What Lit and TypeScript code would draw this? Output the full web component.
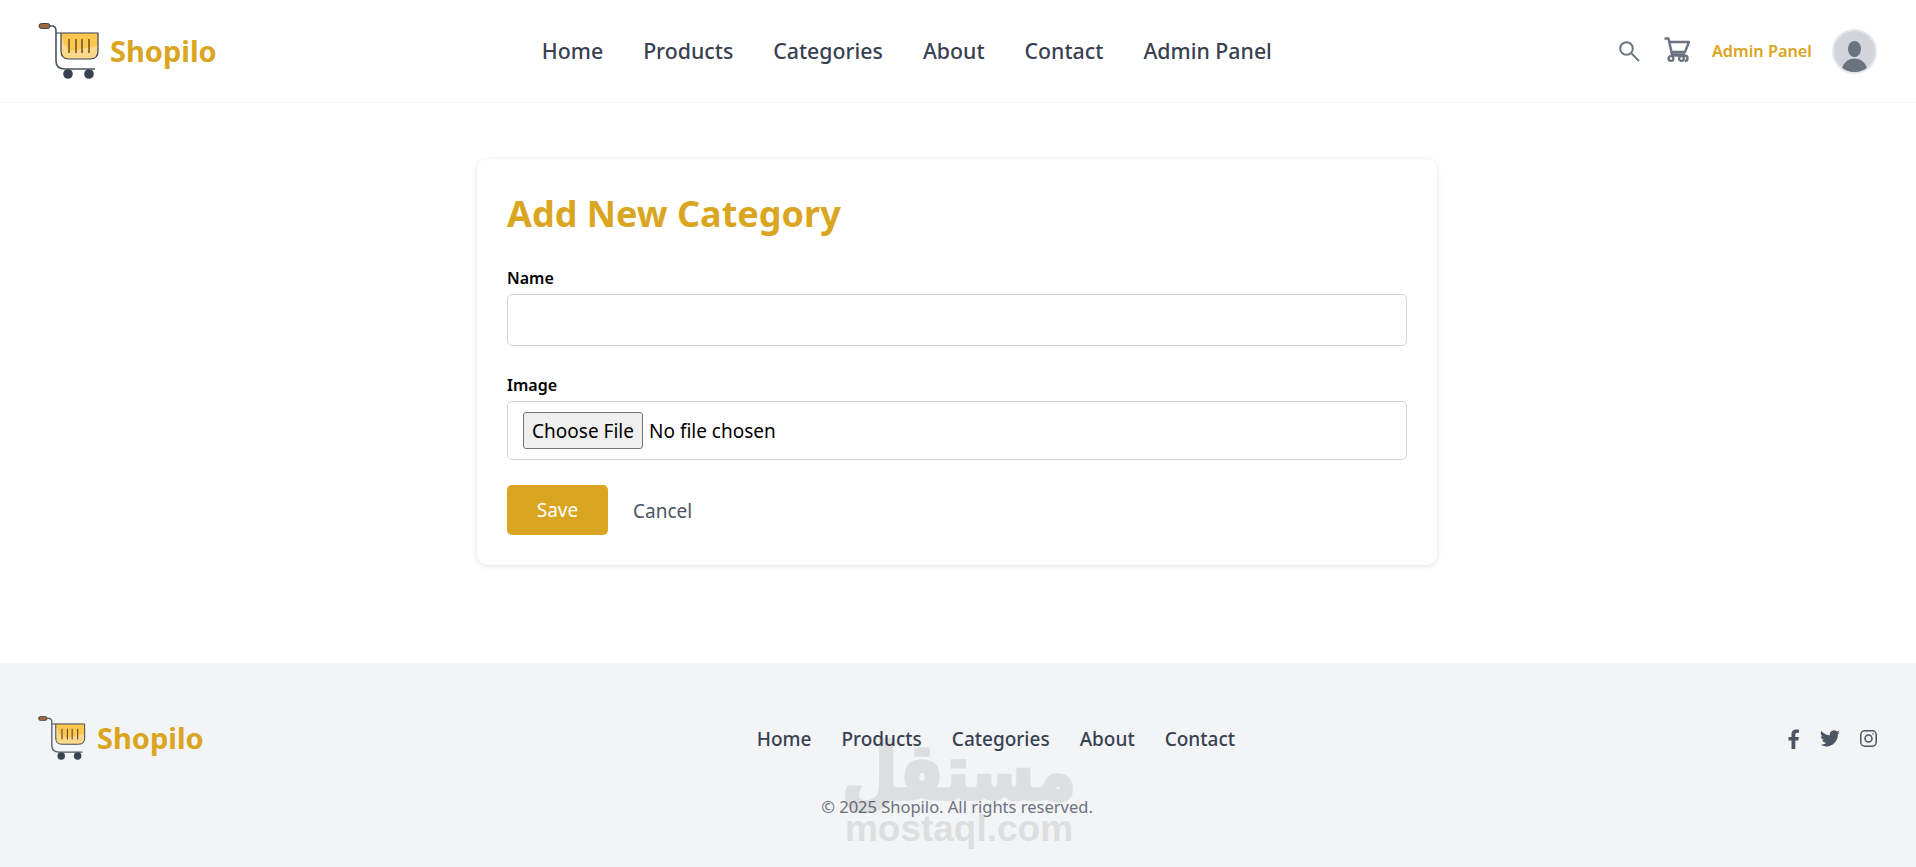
import { LitElement, html, css, svg } from "lit";
import { customElement } from "lit/decorators.js";

const cartLogo = svg`
  <path d="M13 7 H15 Q19 7 19 12 V42 Q19 50 28 50 H58" fill="none" stroke="#4b5563" stroke-width="1.6"/>
  <path d="M24 14 H61 V32 Q61 40 53 40 H32 Q24 40 24 32 Z" fill="#fcd98a"/>
  <path d="M24 14 H61 V27 L33 32 Q26 26 24 14 Z" fill="#fcc64f"/>
  <path d="M19 14 H61 V32 Q61 40 53 40 H32 Q24 40 24 32 V14" fill="none" stroke="#374151" stroke-width="1.2"/>
  <path d="M32 20 V34 M39 20 V34 M45 20 V34 M52 20 V34" stroke="#6b4f2a" stroke-width="1.5" fill="none"/>
  <rect x="2" y="4.5" width="11" height="5" rx="2.5" fill="#a0693a" stroke="#374151" stroke-width="1"/>
  <circle cx="31" cy="55" r="4.8" fill="#374151"/>
  <circle cx="52" cy="55" r="4.8" fill="#374151"/>
`;

@customElement("app-root")
export class AppRoot extends LitElement {
  static styles = css`
    :host { display: block; font-family: "Noto Sans", "Open Sans", sans-serif; color: #000; background: #fff; position: relative; min-height: 867px; }
    * { box-sizing: border-box; }
    a { text-decoration: none; color: inherit; }
    .header { height: 103px; display: flex; align-items: center; justify-content: space-between; padding: 0 39px 0 37px; border-bottom: 1px solid #f3f4f6; }
    .brand { display: flex; align-items: center; gap: 9px; color: #daa520; font-size: 29px; font-weight: 700; }
    .brand svg { display: block; width: 64px; height: 64px; }
    .brand span { margin-bottom: 2px; }
    .footer .brand { gap: 10px; margin-bottom: 1px; }
    .footer .brand svg { width: 50px; height: 50px; }
    .nav { display: flex; gap: 40px; font-size: 21.3px; font-weight: 500; color: #374151; margin: 0 21px 2px 0; }
    .tools { display: flex; align-items: center; }
    .tools svg { display: block; }
    .search { margin-right: 24px; }
    .cart { margin-right: 22px; margin-bottom: 2px; }
    .admin { font-size: 16.3px; font-weight: 600; color: #daa520; margin-right: 20px; }
    .avatar { width: 45px; height: 45px; border-radius: 50%; background: #d1d5db; border: 2px solid #e5e7eb; overflow: hidden; }
    .main { height: 560px; padding-top: 56px; }
    .card { width: 960px; height: 406px; margin: 0 auto 0 477px; padding: 30px; border-radius: 10px; background: #fff; box-shadow: 0 1px 5px rgba(0,0,0,.12); }
    h1 { margin: 0 0 28px; font-size: 36px; line-height: 50px; font-weight: 700; color: #daa520; }
    label { display: block; font-size: 16px; font-weight: 600; line-height: 22px; margin-bottom: 5px; }
    .field { margin-bottom: 28px; }
    .field + .field { margin-bottom: 25px; }
    input { display: block; width: 100%; background: #fff; border: 1px solid #d1d5db; border-radius: 5px; font-family: inherit; font-size: 19px; color: #000; }
    .text { height: 52px; }
    .file { height: 59px; padding: 10px 15px; }
    .file::file-selector-button { height: 37px; width: 120px; padding: 0; margin: 0 6px 0 0; font: 19px "Noto Sans", sans-serif; color: #000; background: #efefef; border: 1px solid #767676; border-radius: 3px; }
    .actions { display: flex; align-items: center; gap: 25px; }
    .save { width: 101px; height: 50px; background: #daa520; color: #fff; border: 0; border-radius: 5px; font: 19px "Noto Sans", sans-serif; }
    .cancel { font-size: 19px; color: #4b5563; padding-top: 1px; }
    .footer { height: 204px; background: #f3f4f6; padding: 0 39px 0 37px; position: relative; }
    .f-top { height: 151px; display: flex; align-items: center; justify-content: space-between; }
    .f-nav { display: flex; gap: 30px; font-size: 19px; font-weight: 500; color: #374151; }
    .social { display: flex; align-items: center; gap: 20px; color: #4b5563; }
    .social svg { display: block; }
    .copy { text-align: center; font-size: 16.5px; color: #6b7280; margin-top: -19px; }
    .mark { position: absolute; left: 845px; top: 735px; width: 228px; color: #000; opacity: .085; pointer-events: none; display: flex; flex-direction: column; align-items: center; }
    .mark .ar { font: 700 64px/74px "DejaVu Sans", sans-serif; -webkit-text-stroke: 3px #000; white-space: nowrap; transform: scaleY(1.22); margin-bottom: 2px; }
    .mark .en { font: 700 37px/36px "Liberation Sans", sans-serif; white-space: nowrap; }
  `;

  render() {
    return html`
      <header class="header">
        <a class="brand"><svg viewBox="0 0 64 64">${cartLogo}</svg><span>Shopilo</span></a>
        <nav class="nav"><a>Home</a><a>Products</a><a>Categories</a><a>About</a><a>Contact</a><a>Admin Panel</a></nav>
        <div class="tools">
          <svg class="search" width="22" height="22" viewBox="0 0 22 22" fill="none" stroke="#6b7280" stroke-width="2"><circle cx="8.5" cy="8.5" r="6.3"/><path d="M13.5 13.5 L21 21" stroke-width="1.8"/></svg>
          <svg class="cart" width="26" height="26" viewBox="0 0 26 26" fill="none" stroke="#6b7280" stroke-width="2.4" stroke-linejoin="round"><path d="M.5 1.5 H4.5 L8 17.500 H21"/><path d="M5.500 5 H25 L21 15 H7.500"/><circle cx="7" cy="21.500" r="2.400"/><circle cx="17.500" cy="21.500" r="2.400"/><path d="M7 18.500 H20.500 Q23.500 18.500 23.500 21.500 Q23.500 24 21 24" /></svg>
          <a class="admin">Admin Panel</a>
          <div class="avatar"><svg width="41" height="41" viewBox="0 0 41 41" fill="#6b7280"><ellipse cx="20.500" cy="18" rx="6.500" ry="8"/><path d="M7.500 39 Q10 27.500 20.500 27.500 Q31 27.500 33.500 39 Q20.500 45 7.500 39Z"/></svg></div>
        </div>
      </header>
      <main class="main">
        <form class="card">
          <h1>Add New Category</h1>
          <div class="field"><label>Name</label><input class="text" type="text" /></div>
          <div class="field"><label>Image</label><input class="file" type="file" /></div>
          <div class="actions"><button class="save" type="button">Save</button><a class="cancel">Cancel</a></div>
        </form>
      </main>
      <footer class="footer">
        <div class="f-top">
          <a class="brand"><svg viewBox="0 0 64 64">${cartLogo}</svg><span>Shopilo</span></a>
          <nav class="f-nav"><a>Home</a><a>Products</a><a>Categories</a><a>About</a><a>Contact</a></nav>
          <div class="social">
            <svg width="12" height="20" viewBox="0 0 12 20" fill="currentColor"><path d="M3.500 20 V11.500 H.500 V8 H3.500 V5.500 C3.500 2 5.500 .500 8.200 .500 C9.500 .500 10.600 .600 11 .700 V3.800 H9.200 C7.700 3.800 7.300 4.600 7.300 5.700 V8 H10.800 L10.300 11.500 H7.300 V20 Z"/></svg>
            <svg width="20" height="17" viewBox="0 0 24 20" fill="currentColor"><path d="M24 2.400c-.9.4-1.800.7-2.800.8 1-.6 1.800-1.600 2.200-2.700-1 .6-2 1-3.100 1.200A4.900 4.900 0 0 0 11.900 6.100 14 14 0 0 1 1.700.9a4.900 4.900 0 0 0 1.500 6.600c-.8 0-1.600-.2-2.200-.6v.1c0 2.400 1.700 4.400 3.900 4.800-.7.2-1.500.2-2.200.1.6 2 2.400 3.400 4.600 3.400A9.900 9.900 0 0 1 0 17.300 14 14 0 0 0 7.500 19.500c9 0 14-7.500 14-14v-.6c1-.7 1.800-1.600 2.500-2.500z"/></svg>
            <svg width="17" height="17" viewBox="0 0 17 17" fill="none" stroke="currentColor" stroke-width="1.500"><rect x=".8" y=".8" width="15.400" height="15.400" rx="4"/><circle cx="8.500" cy="8.500" r="3.500"/><circle cx="13" cy="4" r=".8" fill="currentColor" stroke="none"/></svg>
          </div>
        </div>
        <div class="copy">© 2025 Shopilo. All rights reserved.</div>
      </footer>
      <div class="mark"><div class="ar">مستقل</div><div class="en">mostaql.com</div></div>
    `;
  }
}
